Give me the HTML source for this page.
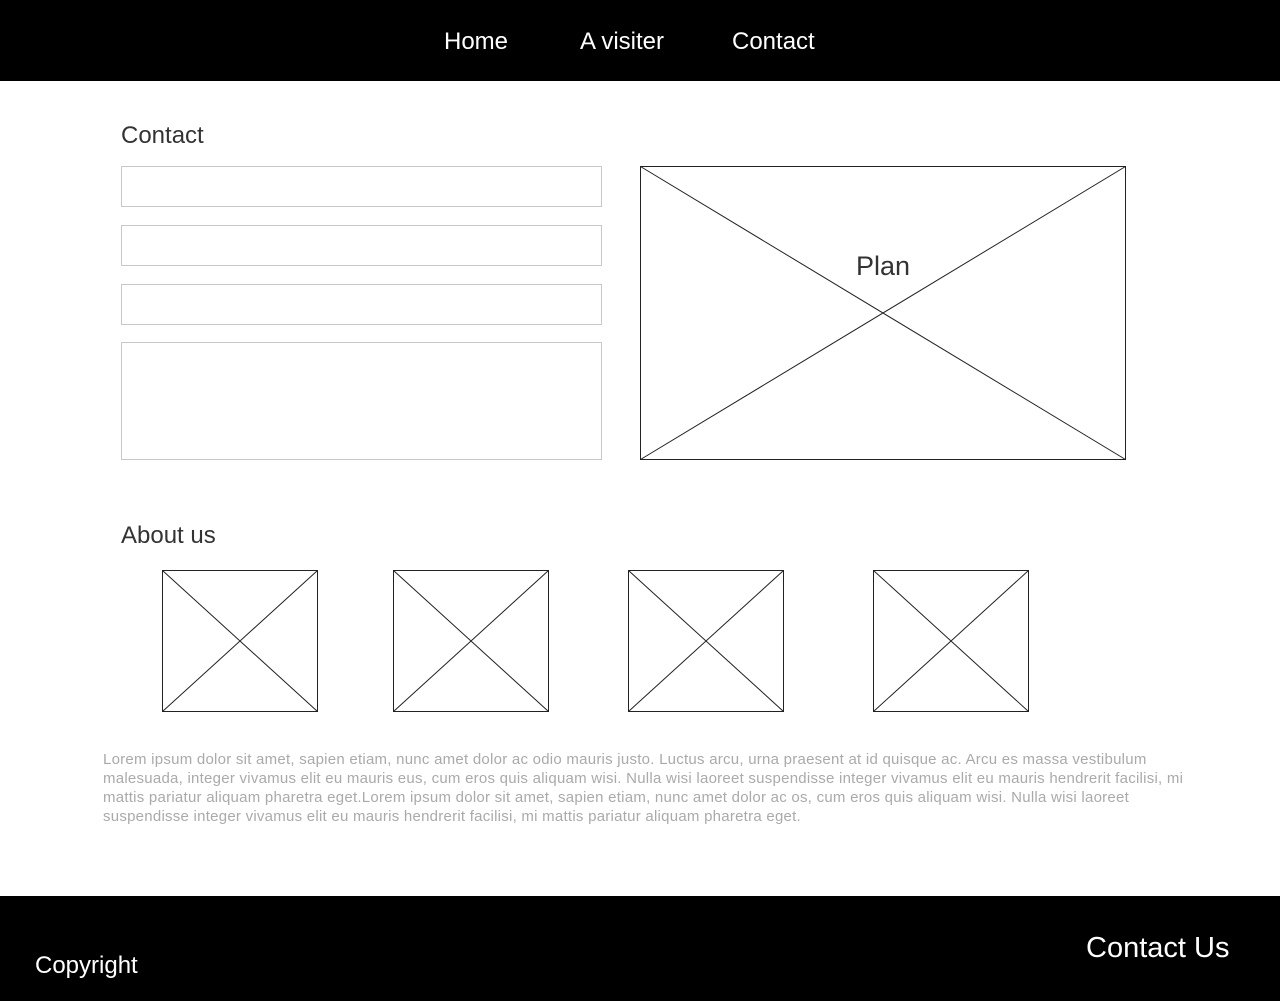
<!DOCTYPE html>
<html><head><style>
body{margin:0;width:1280px;height:1001px;position:relative;background:#fff;font-family:"Liberation Sans",Arial,sans-serif;overflow:hidden}
.a{position:absolute}
.nav{top:0;left:0;width:1280px;height:81px;background:#000}
.nav span{position:absolute;top:28px;color:#fff;font-size:24px}
.h{color:#333;font-size:24px}
.in{position:absolute;border:1px solid #c8c8c8;box-sizing:border-box;left:121px;width:481px}
.lorem{left:103px;top:750px;width:1100px;color:#aaa;font-size:15px;line-height:19px;white-space:nowrap;letter-spacing:0.25px}
.foot{left:0;top:896px;width:1280px;height:105px;background:#000;color:#fff}
</style></head><body>
<div class="a nav"><span style="left:444px">Home</span><span style="left:580px">A visiter</span><span style="left:732px">Contact</span></div>
<div class="a h" style="left:121px;top:122px">Contact</div>
<div class="in" style="top:166px;height:41px"></div>
<div class="in" style="top:225px;height:41px"></div>
<div class="in" style="top:284px;height:41px"></div>
<div class="in" style="top:342px;height:118px"></div>
<svg class="a" style="left:0;top:0" width="1280" height="1001">
<g stroke="#222" stroke-width="1" fill="none">
<rect x="640.5" y="166.5" width="485" height="293"/><path d="M640.5 166.5L1125.5 459.5M1125.5 166.5L640.5 459.5"/>
<rect x="162.5" y="570.5" width="155" height="141"/><path d="M162.5 570.5L317.5 711.5M317.5 570.5L162.5 711.5"/>
<rect x="393.5" y="570.5" width="155" height="141"/><path d="M393.5 570.5L548.5 711.5M548.5 570.5L393.5 711.5"/>
<rect x="628.5" y="570.5" width="155" height="141"/><path d="M628.5 570.5L783.5 711.5M783.5 570.5L628.5 711.5"/>
<rect x="873.5" y="570.5" width="155" height="141"/><path d="M873.5 570.5L1028.5 711.5M1028.5 570.5L873.5 711.5"/>
</g></svg>
<div class="a h" style="left:856px;top:251px;font-size:27px;background:#fff;line-height:30px">Plan</div>
<div class="a h" style="left:121px;top:522px">About us</div>
<div class="a lorem">Lorem ipsum dolor sit amet, sapien etiam, nunc amet dolor ac odio mauris justo. Luctus arcu, urna praesent at id quisque ac. Arcu es massa vestibulum<br>malesuada, integer vivamus elit eu mauris eus, cum eros quis aliquam wisi. Nulla wisi laoreet suspendisse integer vivamus elit eu mauris hendrerit facilisi, mi<br>mattis pariatur aliquam pharetra eget.Lorem ipsum dolor sit amet, sapien etiam, nunc amet dolor ac os, cum eros quis aliquam wisi. Nulla wisi laoreet<br>suspendisse integer vivamus elit eu mauris hendrerit facilisi, mi mattis pariatur aliquam pharetra eget.</div>
<div class="a foot"><span class="a" style="left:35px;top:56px;font-size:24px">Copyright</span><span class="a" style="left:1086px;top:36px;font-size:29px">Contact Us</span></div>
</body></html>
